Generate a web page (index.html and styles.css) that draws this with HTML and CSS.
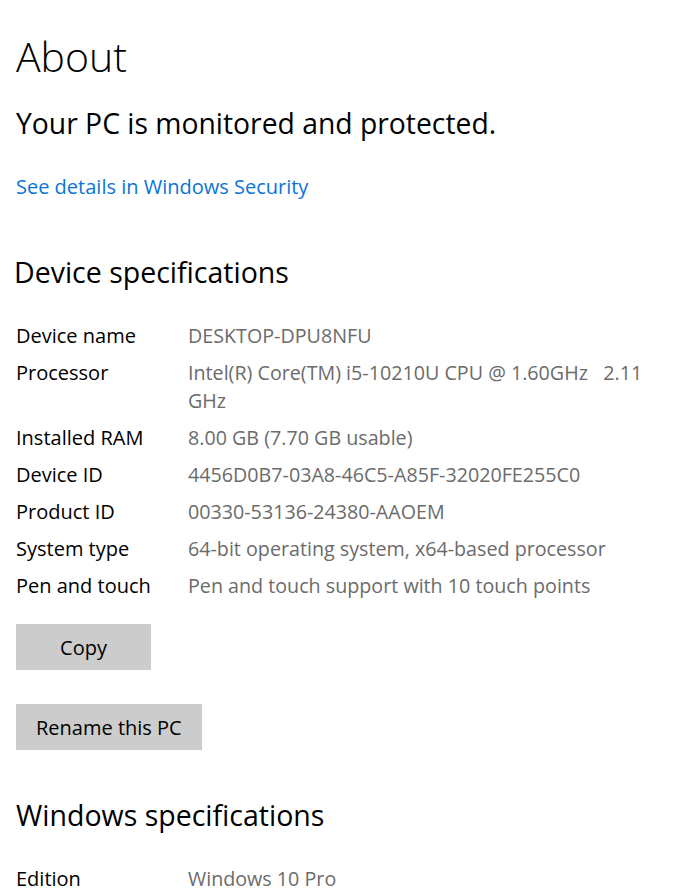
FILE: index.html
```html
<!DOCTYPE html>
<html>
  <head>
    <title>About</title>
    <link rel="stylesheet" href="styles.css">
  </head>
  <body>
    <h1 class="page-title">About</h1>
    <p class="status">Your PC is monitored and protected.</p>
    <div class="link-row">
      <a class="link" href="#">See details in Windows Security</a>
    </div>

    <h2 class="section-title device">Device specifications</h2>
    <dl class="specs">
      <dt>Device name</dt><dd>DESKTOP-DPU8NFU</dd>
      <dt>Processor</dt><dd>Intel(R) Core(TM) i5-10210U CPU @ 1.60GHz &nbsp;&nbsp;2.11 GHz</dd>
      <dt>Installed RAM</dt><dd>8.00 GB (7.70 GB usable)</dd>
      <dt>Device ID</dt><dd>4456D0B7-03A8-46C5-A85F-32020FE255C0</dd>
      <dt>Product ID</dt><dd>00330-53136-24380-AAOEM</dd>
      <dt>System type</dt><dd>64-bit operating system, x64-based processor</dd>
      <dt>Pen and touch</dt><dd>Pen and touch support with 10 touch points</dd>
    </dl>

    <div class="actions">
      <button class="btn">Copy</button>
      <button class="btn">Rename this PC</button>
    </div>

    <h2 class="section-title windows">Windows specifications</h2>
    <dl class="specs">
      <dt>Edition</dt><dd>Windows 10 Pro</dd>
    </dl>
  </body>
</html>
```

FILE: styles.css
```css
/* Settings > About page */
body {
  margin: 0;
  padding: 0 0 0 16px;
  font-family: "Open Sans", "Noto Sans", sans-serif;
  background-color: #ffffff;
  color: #000000;
  overflow: hidden;
}

.page-title {
  margin: 28px 0 0 0;
  font-size: 41px;
  font-weight: 300;
  line-height: 56px;
}

.status {
  margin: 20px 0 0 0;
  font-size: 28.3px;
  line-height: 38px;
}

.link-row {
  margin-top: 31px;
  font-size: 20px;
  line-height: 28px;
}

.link {
  color: #0a74d4;
  text-decoration: none;
}

.section-title {
  margin: 52px 0 0 -2px;
  font-size: 28.5px;
  font-weight: 400;
  line-height: 38px;
}

.section-title.windows {
  margin: 46px 0 0 0;
}

.specs {
  display: grid;
  grid-template-columns: 172px 1fr;
  row-gap: 9px;
  margin: 31px 0 0 0;
  font-size: 20px;
  line-height: 28px;
}

.specs dt {
  margin: 0;
}

.specs dd {
  margin: 0;
  font-size: 19.7px;
  color: #6b6b6b;
}

.actions {
  display: flex;
  flex-direction: column;
  align-items: flex-start;
  gap: 34px;
  margin-top: 24px;
}

.btn {
  min-width: 135px;
  height: 46px;
  padding: 0 20px;
  border: none;
  background-color: #cccccc;
  color: #000000;
  font-family: inherit;
  font-size: 20px;
}
```
